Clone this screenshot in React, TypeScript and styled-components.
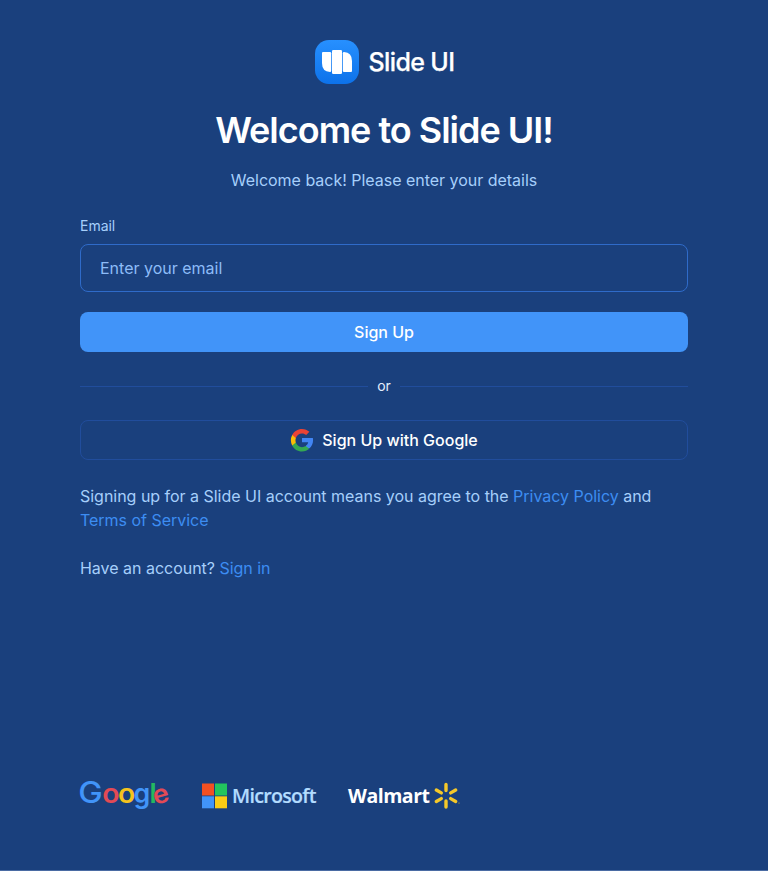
import React from "react";
import styled, { createGlobalStyle } from "styled-components";

const GlobalStyle = createGlobalStyle`
  * { box-sizing: border-box; }
  body { margin: 0; background: #1a407d; font-family: Inter, sans-serif; }
`;

const Page = styled.main`
  min-height: 871px;
  padding: 40px 80px 60px;
  display: flex;
  flex-direction: column;
  background: #1a407d;
  border-bottom: 1px solid #4a6ba3;
  color: #a6cffb;
  font-size: 16px;
  line-height: 24px;
  letter-spacing: -0.02px;
`;

const Brand = styled.div`
  display: flex;
  align-items: center;
  justify-content: center;
  gap: 10px;
  height: 44px;
  padding-left: 1px;
  color: #fff;
  font-size: 25px;
  font-weight: 500;
  letter-spacing: -0.62px;
  -webkit-text-stroke: 0.25px #fff;
`;

const Title = styled.h1`
  margin: 22px 0 0;
  color: #fff;
  font-size: 36px;
  line-height: 48px;
  font-weight: 600;
  letter-spacing: -1px;
  text-align: center;
`;

const Subtitle = styled.p`
  margin: 14px 0 0;
  text-align: center;
`;

const Form = styled.form`
  display: flex;
  flex-direction: column;
  margin-top: 24px;
`;

const Label = styled.label`
  font-size: 14px;
  line-height: 20px;
`;

const Input = styled.input`
  height: 48px;
  margin: 8px 0 20px;
  padding: 0 19px;
  border: 1px solid #2f6bc9;
  border-radius: 8px;
  background: transparent;
  color: #fff;
  font: inherit;
  outline: none;
  &::placeholder { color: #8dbcf8; opacity: 1; }
`;

const Button = styled.button<{ $outline?: boolean }>`
  height: 40px;
  display: flex;
  align-items: center;
  justify-content: center;
  gap: 8px;
  padding: 0;
  border: ${(p) => (p.$outline ? "1px solid #214d9c" : "0")};
  border-radius: 8px;
  background: ${(p) => (p.$outline ? "transparent" : "#4194f9")};
  color: #fff;
  font: 500 16px/24px Inter, sans-serif;
`;

const Divider = styled.div`
  display: flex;
  align-items: center;
  gap: 9px;
  height: 20px;
  margin: 24px 0;
  color: #e3effd;
  font-size: 14px;
  &::before, &::after {
    content: "";
    flex: 1;
    height: 1px;
    background: #214d9c;
  }
`;

const Copy = styled.p`
  margin: 24px 0 0;
`;

const Link = styled.a`
  color: #3d8df2;
  text-decoration: none;
`;

const Logos = styled.footer`
  display: flex;
  align-items: flex-start;
  gap: 32px;
  height: 40px;
  margin-top: auto;
  letter-spacing: 0;
`;

const SlideMark = () => (
  <svg width="44" height="44" viewBox="0 0 44 44">
    <defs>
      <linearGradient id="mark" x1="0" y1="0" x2="0" y2="1">
        <stop offset="0" stopColor="#2790ff" />
        <stop offset="1" stopColor="#0d72ea" />
      </linearGradient>
    </defs>
    <rect width="44" height="44" rx="14" fill="url(#mark)" />
    <path d="M8 12h7q1.200 0 1.200 1.200v17.600q0 1.200-1.200 1.200Q7 31.500 7 23V13q0-1 1-1Z" fill="#fff" />
    <rect x="17" y="10" width="10" height="24" rx="1.300" fill="#fff" />
    <path d="M29 12Q37 12.500 37 21v10q0 1-1 1h-7q-1.200 0-1.200-1.200V13.200q0-1.200 1.200-1.200Z" fill="#fff" />
  </svg>
);

const GoogleMark = () => (
  <svg width="24" height="24" viewBox="0 0 24 24">
    <path fill="#4285f4" d="M23.060 12.250c0-.78-.07-1.530-.2-2.250H12v4.260h6.200c-.26 1.370-1.040 2.530-2.210 3.310v2.770h3.570c2.080-1.920 3.500-4.740 3.500-8.090z" />
    <path fill="#34a853" d="M12 23.500c2.970 0 5.460-.98 7.280-2.660l-3.570-2.770c-.98.66-2.230 1.060-3.710 1.060-2.860 0-5.290-1.930-6.160-4.530H2.180v2.840C3.990 21.030 7.700 23.500 12 23.500z" />
    <path fill="#fbbc05" d="M5.840 14.590a6.900 6.900 0 0 1 0-4.430V7.070H2.180a11.500 11.500 0 0 0 0 10.360z" />
    <path fill="#ea4335" d="M12 5.380c1.620 0 3.060.56 4.210 1.640l3.150-3.150C17.450 2.090 14.970 1 12 1 7.700 1 3.990 3.470 2.180 7.070l3.660 2.840C6.710 7.310 9.140 5.380 12 5.380z" />
  </svg>
);

const GoogleLogo = () => (
  <svg width="90" height="40" viewBox="0 0 90 40" overflow="visible" fontFamily="Inter" fontSize="26" fontWeight="600">
    <text transform="translate(-1.700 33) scale(1.110 1)" fontSize="29.500" fontWeight="500" fill="#4194f9">G</text>
    <text transform="translate(22.200 33) scale(1.090 1)" fill="#e34a55">o</text>
    <text transform="translate(37.900 33) scale(1.090 1)" fill="#f5c31d">o</text>
    <text transform="translate(53.400 33) scale(1.030 1.040)" fill="#4194f9">g</text>
    <text transform="translate(69.500 33)" fontSize="27.500" fill="#24b960">l</text>
    <text transform="translate(75.200 34.900) rotate(-16) scale(1.040 1)" fill="#e34a55">e</text>
  </svg>
);

const MicrosoftLogo = () => (
  <svg width="114" height="40" viewBox="0 0 114 40" overflow="visible">
    <path fill="#f25022" d="M0 13.500h12v12H0z" />
    <path fill="#22c55e" d="M13 13.500h12v12H13z" />
    <path fill="#4194f9" d="M0 26.300h12v12H0z" />
    <path fill="#facc15" d="M13 26.300h12v12H13z" />
    <text x="30" y="33" textLength="84.500" fill="#b3dcff" stroke="#b3dcff" strokeWidth="0.2" fontFamily="Open Sans" fontSize="19.700" fontWeight="600">Microsoft</text>
  </svg>
);

const WalmartLogo = () => (
  <svg width="112" height="40" viewBox="0 0 112 40" overflow="visible">
    <text x="0" y="33" textLength="82" fill="#fff" fontFamily="Open Sans" fontSize="19.500" fontWeight="700">Walmart</text>
    <g stroke="#f5c829" strokeWidth="3.400" strokeLinecap="round">
      <path d="M98 14.500v6M98 31v6M88.300 20l5 2.900M107.700 20l-5 2.900M88.300 31.500l5-2.900M107.700 31.500l-5-2.900" />
    </g>
    <circle cx="111" cy="33" r="0.500" fill="#f5c829" />
  </svg>
);

export default function App() {
  return (
    <>
      <GlobalStyle />
      <Page>
        <Brand><SlideMark />Slide UI</Brand>
        <Title>Welcome to Slide UI!</Title>
        <Subtitle>Welcome back! Please enter your details</Subtitle>
        <Form>
          <Label htmlFor="email">Email</Label>
          <Input id="email" type="email" placeholder="Enter your email" />
          <Button type="button">Sign Up</Button>
          <Divider>or</Divider>
          <Button type="button" $outline><GoogleMark />Sign Up with Google</Button>
        </Form>
        <Copy>
          Signing up for a Slide UI account means you agree to the <Link>Privacy Policy</Link> and <Link>Terms of Service</Link>
        </Copy>
        <Copy>Have an account? <Link>Sign in</Link></Copy>
        <Logos><GoogleLogo /><MicrosoftLogo /><WalmartLogo /></Logos>
      </Page>
    </>
  );
}
